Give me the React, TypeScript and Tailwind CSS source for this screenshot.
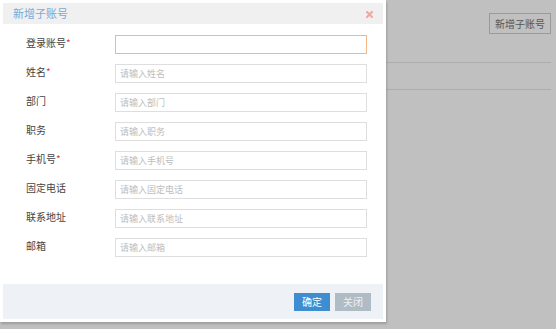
import { useState } from 'react';

interface Field {
  label: string;
  placeholder: string;
  required?: boolean;
}

const fields: Field[] = [
  { label: '登录账号', placeholder: '', required: true },
  { label: '姓名', placeholder: '请输入姓名', required: true },
  { label: '部门', placeholder: '请输入部门' },
  { label: '职务', placeholder: '请输入职务' },
  { label: '手机号', placeholder: '请输入手机号', required: true },
  { label: '固定电话', placeholder: '请输入固定电话' },
  { label: '联系地址', placeholder: '请输入联系地址' },
  { label: '邮箱', placeholder: '请输入邮箱' },
];

const font = { fontFamily: '"Noto Sans CJK SC", "Noto Sans", sans-serif' };

const App = () => {
  const [values, setValues] = useState<Record<string, string>>({});

  return (
    <div
      className="relative w-[556px] h-[329px] overflow-hidden bg-[#c0c0c0]"
      style={font}
    >
      {/* page behind the overlay */}
      <div className="flex flex-col pr-[5px]">
        <div className="flex justify-end pt-[13px]">
          <button className="h-[21px] w-[62px] border border-[#9a9a9a] text-[10px] text-[#555] leading-none">
            新增子账号
          </button>
        </div>
        <div className="mt-[28px] h-px bg-[#adadad]" />
        <div className="mt-[26px] h-px bg-[#adadad]" />
      </div>

      {/* modal */}
      <div className="absolute left-0 top-0 flex h-[322px] w-[386px] flex-col bg-white p-[3px] shadow-[1px_2px_2px_rgba(0,0,0,0.18)]">
        <div className="flex h-[21px] items-center justify-between bg-[#f0f0f0] pl-[10px] pr-[10px]">
          <span className="text-[11px] text-[#7aa8d6]">新增子账号</span>
          <svg width="7" height="7" viewBox="0 0 7 7" className="mt-px">
            <path d="M1 1L6 6M6 1L1 6" stroke="#eba79f" strokeWidth="2" strokeLinecap="round" />
          </svg>
        </div>

        <div className="flex flex-1 flex-col gap-[10px] pt-[11px]">
          {fields.map((f, i) => (
            <div key={f.label} className="flex items-center">
              <div className="w-[112px] pl-[23px] pb-[4px] text-[10px] text-[#444]">
                {f.label}
                {f.required && <span className="text-[#e0403a]">*</span>}
              </div>
              <input
                value={values[f.label] ?? ''}
                onChange={(e) => setValues({ ...values, [f.label]: e.target.value })}
                placeholder={f.placeholder}
                className={`h-[19px] w-[252px] border px-[4px] text-[9px] text-[#444] outline-none placeholder:text-[#bdbdbd] ${
                  i === 0 ? 'border-[#f2b886]' : 'border-[#dedede]'
                }`}
              />
            </div>
          ))}
        </div>

        <div className="flex h-[35px] items-center justify-end gap-[5px] bg-[#eef1f5] pr-[12px]">
          <button className="h-[18px] w-[36px] bg-[#3e8dd0] text-[10px] text-white leading-none">
            确定
          </button>
          <button className="h-[18px] w-[36px] bg-[#afbcc6] text-[10px] text-[#eef1f5] leading-none">
            关闭
          </button>
        </div>
      </div>
    </div>
  );
};

export default App;
